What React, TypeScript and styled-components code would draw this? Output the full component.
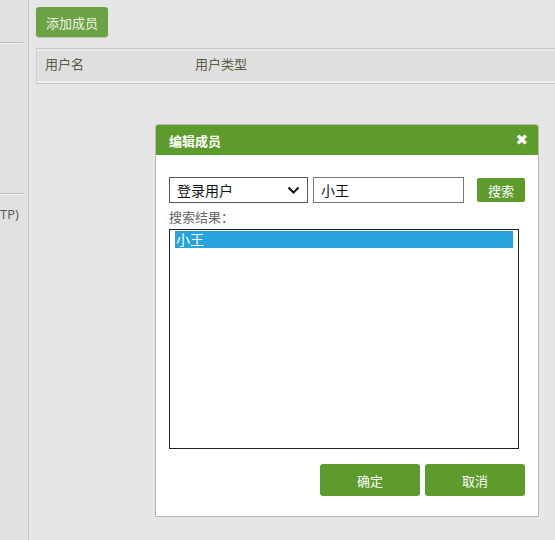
import React from 'react';
import styled, { createGlobalStyle } from 'styled-components';

const Global = createGlobalStyle`
  html, body {
    margin: 0;
    padding: 0;
    background: #e6e6e6;
    font-family: "Noto Sans CJK SC", "Noto Sans", sans-serif;
  }
`

const Page = styled.div`
  display: flex;
  height: 540px;
  position: relative;
  overflow: hidden;
`

const Sidebar = styled.aside`
  width: 28px;
  flex-shrink: 0;
  background: #e1e1e1;
  border-right: 1px solid #c9c9c9;
  display: flex;
  flex-direction: column;
`

const SideRule = styled.div<{ $top: number }>`
  margin-top: ${p => p.$top}px;
  width: 23px;
  height: 1px;
  background: #bdbdbd;
  border-bottom: 1px solid #f4f4f4;
`

const SideLabel = styled.div`
  margin-top: 10px;
  white-space: nowrap;
  font-family: "Open Sans", "Noto Sans", sans-serif;
  font-size: 13px;
  color: #555;
`

const Main = styled.main`
  flex: 1;
  padding: 7px 0 0 7px;
  min-width: 0;
`

const AddButton = styled.button`
  width: 72px;
  height: 30px;
  border: none;
  border-radius: 3px;
  background: #6ba243;
  color: #eef5e6;
  font-family: inherit;
  font-size: 13px;
  padding: 0;
  box-shadow: 0 1px 1px rgba(0, 0, 0, 0.15);
`

const TableHead = styled.div`
  margin-top: 11px;
  height: 28px;
  border-top: 1px solid #c6c6c6;
  border-bottom: 1px solid #c6c6c6;
  border-left: 1px solid #cfcfcf;
  background: #dfdfdf;
  box-shadow: inset 0 2px 0 #e9e9e9, inset 0 -2px 0 #ececec;
  display: flex;
  align-items: flex-start;
  padding-top: 6px;
  box-sizing: content-box;
`

const HeadCell = styled.div<{ $w: number }>`
  width: ${p => p.$w}px;
  box-sizing: border-box;
  padding-left: 8px;
  font-size: 13px;
  line-height: 18px;
  color: #5c5c44;
`

const Modal = styled.div`
  position: absolute;
  left: 155px;
  top: 124px;
  width: 382px;
  height: 391px;
  background: #fff;
  border: 1px solid #b9b9b9;
  border-radius: 3px 3px 0 0;
  display: flex;
  flex-direction: column;
`

const ModalHeader = styled.div`
  height: 30px;
  background: #5c9b2c;
  border-radius: 2px 2px 0 0;
  display: flex;
  align-items: center;
  justify-content: space-between;
  padding: 0 10px 0 13px;
  color: #fff;
`

const ModalTitle = styled.div`
  font-size: 13px;
  font-weight: bold;
`

const Close = styled.span`
  font-family: "DejaVu Sans", sans-serif;
  font-size: 15px;
  font-weight: bold;
`

const ModalBody = styled.div`
  padding: 22px 13px 0 13px;
  display: flex;
  flex-direction: column;
`

const SearchRow = styled.div`
  display: flex;
  align-items: center;
`

const Select = styled.div`
  width: 130px;
  height: 24px;
  border: 1px solid #555;
  display: flex;
  align-items: center;
  justify-content: space-between;
  padding-left: 7px;
  box-sizing: content-box;
  font-size: 14px;
  color: #111;
  & svg { margin-right: 7px; }
`

const TextInput = styled.div`
  margin-left: 5px;
  width: 142px;
  height: 24px;
  border: 1px solid #777;
  padding-left: 7px;
  display: flex;
  align-items: center;
  font-size: 14px;
  color: #111;
`

const SearchButton = styled.button`
  margin-left: 13px;
  width: 48px;
  height: 24px;
  border: none;
  border-radius: 2px;
  background: #5c9b2c;
  color: #fff;
  font-family: inherit;
  font-size: 13px;
  padding: 0;
`

const Label = styled.div`
  margin-top: 4px;
  font-size: 13px;
  color: #666;
  line-height: 19px;
`

const ListBox = styled.div`
  margin-top: 3px;
  width: 338px;
  height: 217px;
  border: 1px solid #222;
  padding: 1px 5px 0 5px;
  box-sizing: content-box;
`

const Option = styled.div<{ $selected?: boolean }>`
  height: 17px;
  line-height: 17px;
  padding-left: 1px;
  font-size: 14px;
  background: ${p => (p.$selected ? '#27a3dd' : 'transparent')};
  color: ${p => (p.$selected ? '#fff' : '#111')};
`

const Footer = styled.div`
  margin-top: 15px;
  display: flex;
  justify-content: flex-end;
  gap: 5px;
`

const FootButton = styled.button`
  width: 100px;
  height: 32px;
  border: none;
  border-radius: 3px;
  background: #5c9b2c;
  color: #fff;
  font-family: inherit;
  font-size: 13px;
  padding: 0;
`

const Chevron = () => (
  <svg width="13" height="9" viewBox="0 0 13 9">
    <path d="M1.5 1.5 L6.5 6.5 L11.5 1.5" fill="none" stroke="#111" strokeWidth="2" />
  </svg>
)

const App: React.FC = () => {
  return (
    <Page>
      <Global />
      <Sidebar>
        <SideRule $top={42} />
        <SideRule $top={149} />
        <SideLabel>TP)</SideLabel>
      </Sidebar>
      <Main>
        <AddButton>添加成员</AddButton>
        <TableHead>
          <HeadCell $w={150}>用户名</HeadCell>
          <HeadCell $w={150}>用户类型</HeadCell>
        </TableHead>
      </Main>
      <Modal>
        <ModalHeader>
          <ModalTitle>编辑成员</ModalTitle>
          <Close>✖</Close>
        </ModalHeader>
        <ModalBody>
          <SearchRow>
            <Select>
              登录用户
              <Chevron />
            </Select>
            <TextInput>小王</TextInput>
            <SearchButton>搜索</SearchButton>
          </SearchRow>
          <Label>搜索结果：</Label>
          <ListBox>
            <Option $selected>小王</Option>
          </ListBox>
          <Footer>
            <FootButton>确定</FootButton>
            <FootButton>取消</FootButton>
          </Footer>
        </ModalBody>
      </Modal>
    </Page>
  );
}

export default App;
